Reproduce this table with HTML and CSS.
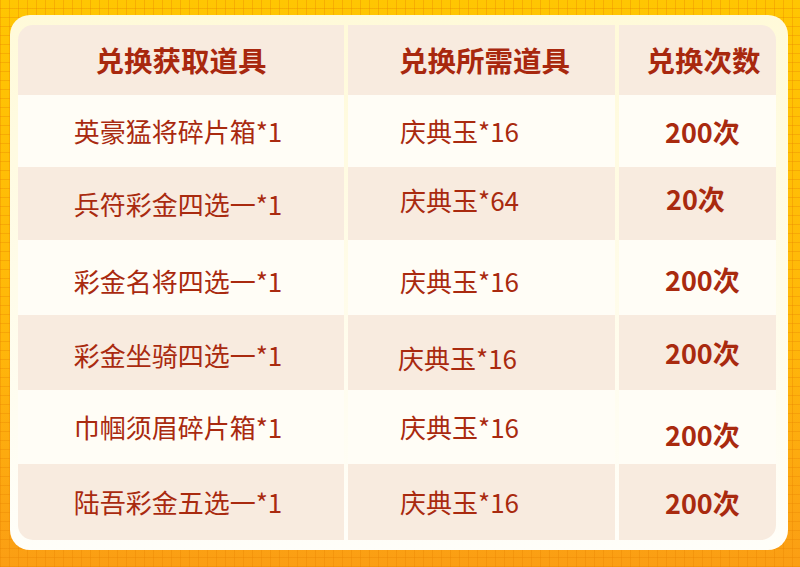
FILE: index.html
```html
<!DOCTYPE html>
<html lang="zh-CN">
<head>
<meta charset="utf-8">
<title>兑换</title>
<link rel="stylesheet" href="styles.css">
</head>
<body>
<div class="panel">
  <div class="table">
    <div class="cell head c1 tl">兑换获取道具</div>
    <div class="cell head c2">兑换所需道具</div>
    <div class="cell head c3 tr">兑换次数</div>

    <div class="cell light c1">英豪猛将碎片箱*1</div>
    <div class="cell light c2">庆典玉*16</div>
    <div class="cell light c3 num">200次</div>

    <div class="cell dark c1">兵符彩金四选一*1</div>
    <div class="cell dark c2 up4">庆典玉*64</div>
    <div class="cell dark c3 num up5 shift">20次</div>

    <div class="cell light c1 dn3">彩金名将四选一*1</div>
    <div class="cell light c2 dn3">庆典玉*16</div>
    <div class="cell light c3 num dn2">200次</div>

    <div class="cell dark c1 dn2">彩金坐骑四选一*1</div>
    <div class="cell dark c2 dn5 shift-l">庆典玉*16</div>
    <div class="cell dark c3 num">200次</div>

    <div class="cell light c1">巾帼须眉碎片箱*1</div>
    <div class="cell light c2">庆典玉*16</div>
    <div class="cell light c3 num dn7">200次</div>

    <div class="cell dark c1 bl">陆吾彩金五选一*1</div>
    <div class="cell dark c2">庆典玉*16</div>
    <div class="cell dark c3 num br">200次</div>
  </div>
</div>
</body>
</html>
```
FILE: styles.css
```css
html, body {
  margin: 0;
  padding: 0;
}
body {
  width: 800px;
  height: 567px;
  box-sizing: border-box;
  padding: 15px 12px 17px 10px;
  font-family: "Noto Sans CJK SC", "Noto Sans", sans-serif;
  color: #a92a0f;
  background-color: #ffb300;
  background-image:
    repeating-linear-gradient(90deg, rgba(232, 130, 0, 0.35) 0 1px, transparent 1px 9px),
    repeating-linear-gradient(0deg, rgba(232, 130, 0, 0.35) 0 1px, transparent 1px 9px),
    linear-gradient(180deg, #ffc602 0%, #ffb70a 60%, #fb9e14 100%);
  overflow: hidden;
}
.panel {
  height: 100%;
  box-sizing: border-box;
  padding: 10px 12px 10px 8px;
  border-radius: 20px;
  background: linear-gradient(180deg, #fffad9 0%, #fffce9 50%, #fffef9 100%);
}
.table {
  display: grid;
  grid-template-columns: 326px 267px 157px;
  grid-template-rows: 70px 72px 73px 75px 75px 74px 76px;
  column-gap: 4px;
  height: 100%;
}
.cell {
  display: flex;
  align-items: center;
  justify-content: center;
  font-size: 26px;
  line-height: 1;
  box-sizing: border-box;
  white-space: nowrap;
}
.head {
  background: #f8ebdf;
  font-size: 28.5px;
  font-weight: 700;
  color: #a8280e;
}
.light { background: #fffdf6; }
.dark { background: #f8ebdf; }
.c1:not(.head) { padding-right: 6px; }
.head.c2 { padding-left: 6px; }
.head.c3 { padding-left: 12px; }
.c2:not(.head) {
  justify-content: flex-start;
  padding-left: 52px;
}
.c3:not(.head) {
  justify-content: flex-start;
  padding-left: 46px;
}
.num {
  font-weight: 700;
  font-size: 27px;
}
.c3.shift { padding-left: 47px; }
.c2.shift-l { padding-left: 50px; }
.up4 { padding-bottom: 8px; }
.up5 { padding-bottom: 10px; }
.dn2 { padding-top: 4px; }
.dn3 { padding-top: 6px; }
.dn5 { padding-top: 10px; }
.dn7 { padding-top: 14px; }
.tl { border-top-left-radius: 15px; }
.tr { border-top-right-radius: 15px; }
.bl { border-bottom-left-radius: 15px; }
.br { border-bottom-right-radius: 15px; }
```
